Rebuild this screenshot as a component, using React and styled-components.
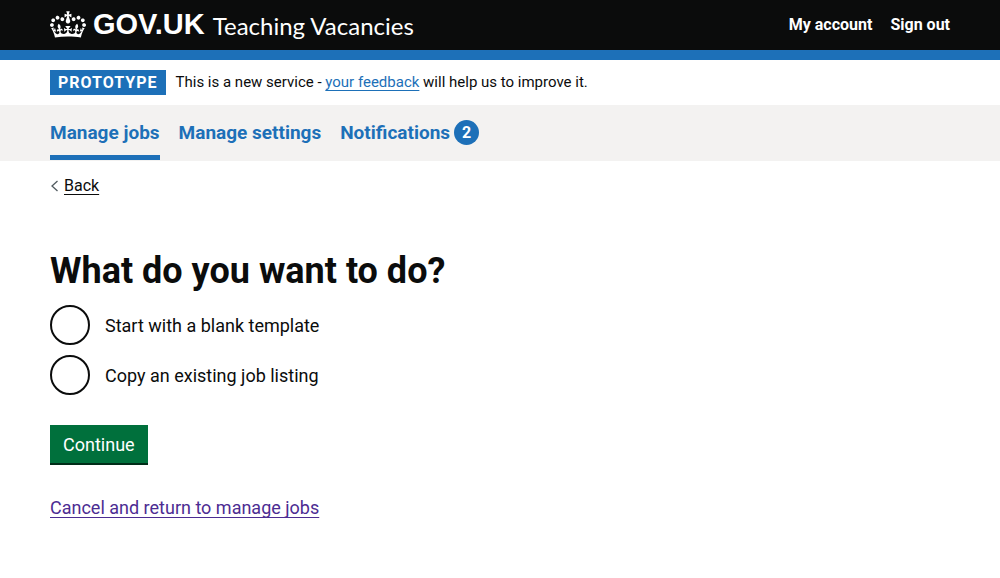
import React from "react";
import styled, { createGlobalStyle } from "styled-components";

const ink = "#0b0c0c";
const blue = "#1d70b8";

const GlobalStyle = createGlobalStyle`
  *, *::before, *::after { box-sizing: border-box; }
  body {
    margin: 0;
    background: #fff;
    color: ${ink};
    font-family: Roboto, "Noto Sans", sans-serif;
    font-size: 18px;
    line-height: 25px;
  }
`;

const Container = styled.div`
  max-width: 960px;
  margin: 0 50px;
`;

const Header = styled.header`
  background: ${ink};
  border-bottom: 10px solid ${blue};
`;

const HeaderRow = styled(Container)`
  display: flex;
  align-items: center;
  justify-content: space-between;
  height: 50px;
`;

const Brand = styled.div`
  display: flex;
  align-items: center;
  gap: 8px;
`;

const HeaderLink = styled.a`
  color: #fff;
  text-decoration: none;
`;

const LogoLink = styled(HeaderLink)`
  display: flex;
  align-items: center;
  gap: 7px;
  padding-bottom: 2px;
  font: 700 29px/30px "Liberation Sans", sans-serif;
`;

const Crown = styled.svg`
  width: 36px;
  height: 27px;
  fill: currentColor;
`;

const ServiceLink = styled(HeaderLink)`
  padding-top: 2px;
  font-family: Lato, sans-serif;
  font-size: 24px;
  line-height: 30px;
`;

const AccountNav = styled.nav`
  display: flex;
  gap: 18px;
  padding-bottom: 2px;
  font-size: 16px;
  font-weight: 700;
`;

const PhaseBanner = styled(Container)`
  display: flex;
  align-items: center;
  gap: 10px;
  padding: 10px 0;
`;

const PhaseTag = styled.strong`
  padding: 0 8px;
  background: ${blue};
  color: #fff;
  font-size: 16px;
  letter-spacing: 1px;
  text-transform: uppercase;
`;

const PhaseText = styled.p`
  margin: 0;
  font-size: 15px;
`;

const Link = styled.a`
  color: ${({ $color }) => $color || blue};
  text-decoration: underline;
  text-decoration-thickness: 1px;
  text-underline-offset: 3px;
  text-decoration-skip-ink: none;
`;

const PrimaryNav = styled.nav`
  background: #f3f2f1;
  padding-bottom: 1px;
`;

const NavList = styled.ul`
  display: flex;
  gap: 19px;
  margin: 0;
  padding: 0;
  list-style: none;
`;

const NavLink = styled.a`
  display: flex;
  align-items: center;
  gap: 4px;
  height: 55px;
  border-top: 5px solid transparent;
  border-bottom: 5px solid ${({ $current }) => ($current ? blue : "transparent")};
  color: ${blue};
  font-size: 19px;
  font-weight: 700;
  text-decoration: none;
`;

const Count = styled.span`
  width: 25px;
  height: 25px;
  border-radius: 50%;
  background: ${blue};
  color: #fff;
  font-size: 16px;
  text-align: center;
`;

const BackRow = styled.div`
  display: flex;
  align-items: center;
  gap: 5px;
  padding-top: 12px;
  font-size: 16px;
`;

const Chevron = styled.svg`
  width: 9px;
  height: 12px;
  fill: none;
  stroke: #505a5f;
  stroke-width: 1.3;
`;

const Form = styled.form`
  padding: 50px 0;
`;

const Fieldset = styled.fieldset`
  display: flex;
  flex-direction: column;
  gap: 10px;
  min-width: 0;
  margin: 0 0 30px;
  padding: 0;
  border: 0;
`;

const Legend = styled.legend`
  padding: 0 0 10px;
`;

const Title = styled.h1`
  margin: 0;
  font-size: 36px;
  line-height: 47px;
`;

const RadioItem = styled.div`
  display: flex;
  align-items: center;
`;

const Radio = styled.input`
  appearance: none;
  flex: none;
  width: 40px;
  height: 40px;
  margin: 0;
  border: 2px solid ${ink};
  border-radius: 50%;
  background: #fff;

  &:checked {
    background: radial-gradient(${ink} 10px, #fff 11px);
  }
`;

const RadioLabel = styled.label`
  padding: 5px 15px;
`;

const Button = styled.button`
  display: block;
  height: 40px;
  margin: 0 0 30px;
  padding: 0 13px;
  border: 0;
  border-bottom: 2px solid #002d18;
  background: #00703c;
  color: #fff;
  font: inherit;
`;

const crownPath =
  "M25 30.2c3.5 1.5 7.7-.2 9.1-3.7 1.5-3.6-.2-7.8-3.9-9.2-3.6-1.4-7.6.3-9.1 3.9-1.4 3.5.3 7.5 3.9 9zM9 39.5c3.6 1.5 7.8-.2 9.2-3.7 1.5-3.6-.2-7.8-3.9-9.1-3.6-1.5-7.6.2-9.1 3.8-1.4 3.5.3 7.5 3.8 9zM4.4 57.2c3.5 1.5 7.7-.2 9.1-3.8 1.5-3.6-.2-7.7-3.9-9.1-3.5-1.5-7.6.3-9.1 3.8-1.4 3.5.3 7.6 3.9 9.1zm38.3-21.4c3.5 1.5 7.7-.2 9.1-3.8 1.5-3.6-.2-7.7-3.9-9.1-3.6-1.5-7.6.3-9.1 3.8-1.3 3.6.4 7.7 3.9 9.1zm64.4-5.6c-3.6 1.5-7.8-.2-9.1-3.7-1.5-3.6.2-7.8 3.8-9.2 3.6-1.4 7.7.3 9.2 3.9 1.3 3.5-.4 7.5-3.9 9zm15.9 9.3c-3.6 1.5-7.7-.2-9.1-3.7-1.5-3.6.2-7.8 3.7-9.1 3.6-1.5 7.7.2 9.2 3.8 1.5 3.5-.3 7.5-3.8 9zm4.7 17.7c-3.6 1.5-7.8-.2-9.2-3.8-1.5-3.6.2-7.7 3.9-9.1 3.6-1.5 7.7.3 9.2 3.8 1.3 3.5-.4 7.6-3.9 9.1zM89.3 35.8c-3.6 1.5-7.8-.2-9.2-3.8-1.4-3.6.2-7.7 3.9-9.1 3.6-1.5 7.7.3 9.2 3.8 1.4 3.6-.3 7.7-3.9 9.1zM69.7 17.7l8.9 4.7V9.3l-8.9 2.8c-.2-.3-.5-.6-.9-.9L72.4 0H59.6l3.5 11.2c-.3.3-.6.5-.9.9l-8.8-2.8v13.1l8.8-4.7c.3.3.6.7.9.9l-5 15.4v.1c-.2.8-.4 1.6-.4 2.4 0 4.1 3.1 7.5 7 8.1h.2c.3 0 .7.1 1 .1.4 0 .7 0 1-.1h.2c4-.6 7.1-4.1 7.1-8.1 0-.8-.1-1.7-.4-2.4V34l-5.1-15.4c.4-.2.7-.6 1-.9zM66 92.8c16.9 0 32.8 1.1 47.1 3.2 4-16.9 8.9-26.7 14-33.5l-9.6-3.4c1 4.9 1.1 7.2 0 10.2-1.5-1.4-3-4.3-4.2-8.7L108.6 76c2.8-2 5-3.2 7.5-3.3-4.4 9.4-10 11.9-13.6 11.2-4.3-.8-6.3-4.6-5.6-7.9 1-4.7 5.7-5.9 8-.5 4.3-8.7-3-11.4-7.6-8.8 7.1-7.2 7.9-13.5 2.1-21.1-8 6.1-8.1 12.3-4.5 20.8-4.7-5.4-12.1-2.5-9.5 6.2 3.4-5.2 7.9-2 7.2 3.1-.6 4.3-6.4 7.8-13.5 7.2-10.3-.9-10.9-8-11.2-13.8 2.5-.5 7.1 1.8 11 7.3L80.2 60c-4.1 4.4-8 5.3-12.3 5.4 1.4-4.4 8-11.6 8-11.6H55.5s6.4 7.2 7.9 11.6c-4.2-.1-8-1-12.3-5.4l1.4 16.4c3.9-5.5 8.5-7.7 10.9-7.3-.3 5.8-.9 12.8-11.1 13.8-7.2.6-12.9-2.9-13.5-7.2-.7-5 3.8-8.3 7.1-3.1 2.7-8.7-4.6-11.6-9.4-6.2 3.7-8.5 3.6-14.7-4.6-20.8-5.8 7.6-5 13.9 2.2 21.1-4.7-2.6-11.9.1-7.7 8.8 2.3-5.5 7.1-4.2 8.1.5.7 3.3-1.3 7.1-5.7 7.9-3.5.7-9-1.8-13.5-11.2 2.5.1 4.7 1.3 7.5 3.3l-4.7-15.4c-1.2 4.4-2.7 7.2-4.3 8.7-1.1-3-.9-5.3 0-10.2l-9.5 3.4c5 6.9 9.9 16.7 14 33.5 14.8-2.1 30.8-3.2 47.7-3.2z";

const options = [
  { id: "blank", label: "Start with a blank template" },
  { id: "copy", label: "Copy an existing job listing" },
];

export default function App() {
  return (
    <>
      <GlobalStyle />
      <Header>
        <HeaderRow>
          <Brand>
            <LogoLink href="#">
              <Crown viewBox="0 0 132 97" aria-hidden="true">
                <path fillRule="evenodd" d={crownPath} />
              </Crown>
              GOV.UK
            </LogoLink>
            <ServiceLink href="#">Teaching Vacancies</ServiceLink>
          </Brand>
          <AccountNav aria-label="Account">
            <HeaderLink href="#">My account</HeaderLink>
            <HeaderLink href="#">Sign out</HeaderLink>
          </AccountNav>
        </HeaderRow>
      </Header>

      <PhaseBanner>
        <PhaseTag>Prototype</PhaseTag>
        <PhaseText>
          This is a new service - <Link href="#">your feedback</Link> will help us to improve it.
        </PhaseText>
      </PhaseBanner>

      <PrimaryNav aria-label="Primary">
        <Container>
          <NavList>
            <li><NavLink href="#" $current aria-current="page">Manage jobs</NavLink></li>
            <li><NavLink href="#">Manage settings</NavLink></li>
            <li><NavLink href="#">Notifications <Count>2</Count></NavLink></li>
          </NavList>
        </Container>
      </PrimaryNav>

      <Container>
        <BackRow>
          <Chevron viewBox="0 0 9 12" aria-hidden="true">
            <path d="M7.5 1 2 6l5.500 5" />
          </Chevron>
          <Link href="#" $color={ink}>Back</Link>
        </BackRow>

        <main>
          <Form onSubmit={(event) => event.preventDefault()}>
            <Fieldset>
              <Legend><Title>What do you want to do?</Title></Legend>
              {options.map(({ id, label }) => (
                <RadioItem key={id}>
                  <Radio type="radio" name="start" id={id} value={id} />
                  <RadioLabel htmlFor={id}>{label}</RadioLabel>
                </RadioItem>
              ))}
            </Fieldset>
            <Button type="submit">Continue</Button>
            <Link href="#" $color="#4c2c92">Cancel and return to manage jobs</Link>
          </Form>
        </main>
      </Container>
    </>
  );
}
